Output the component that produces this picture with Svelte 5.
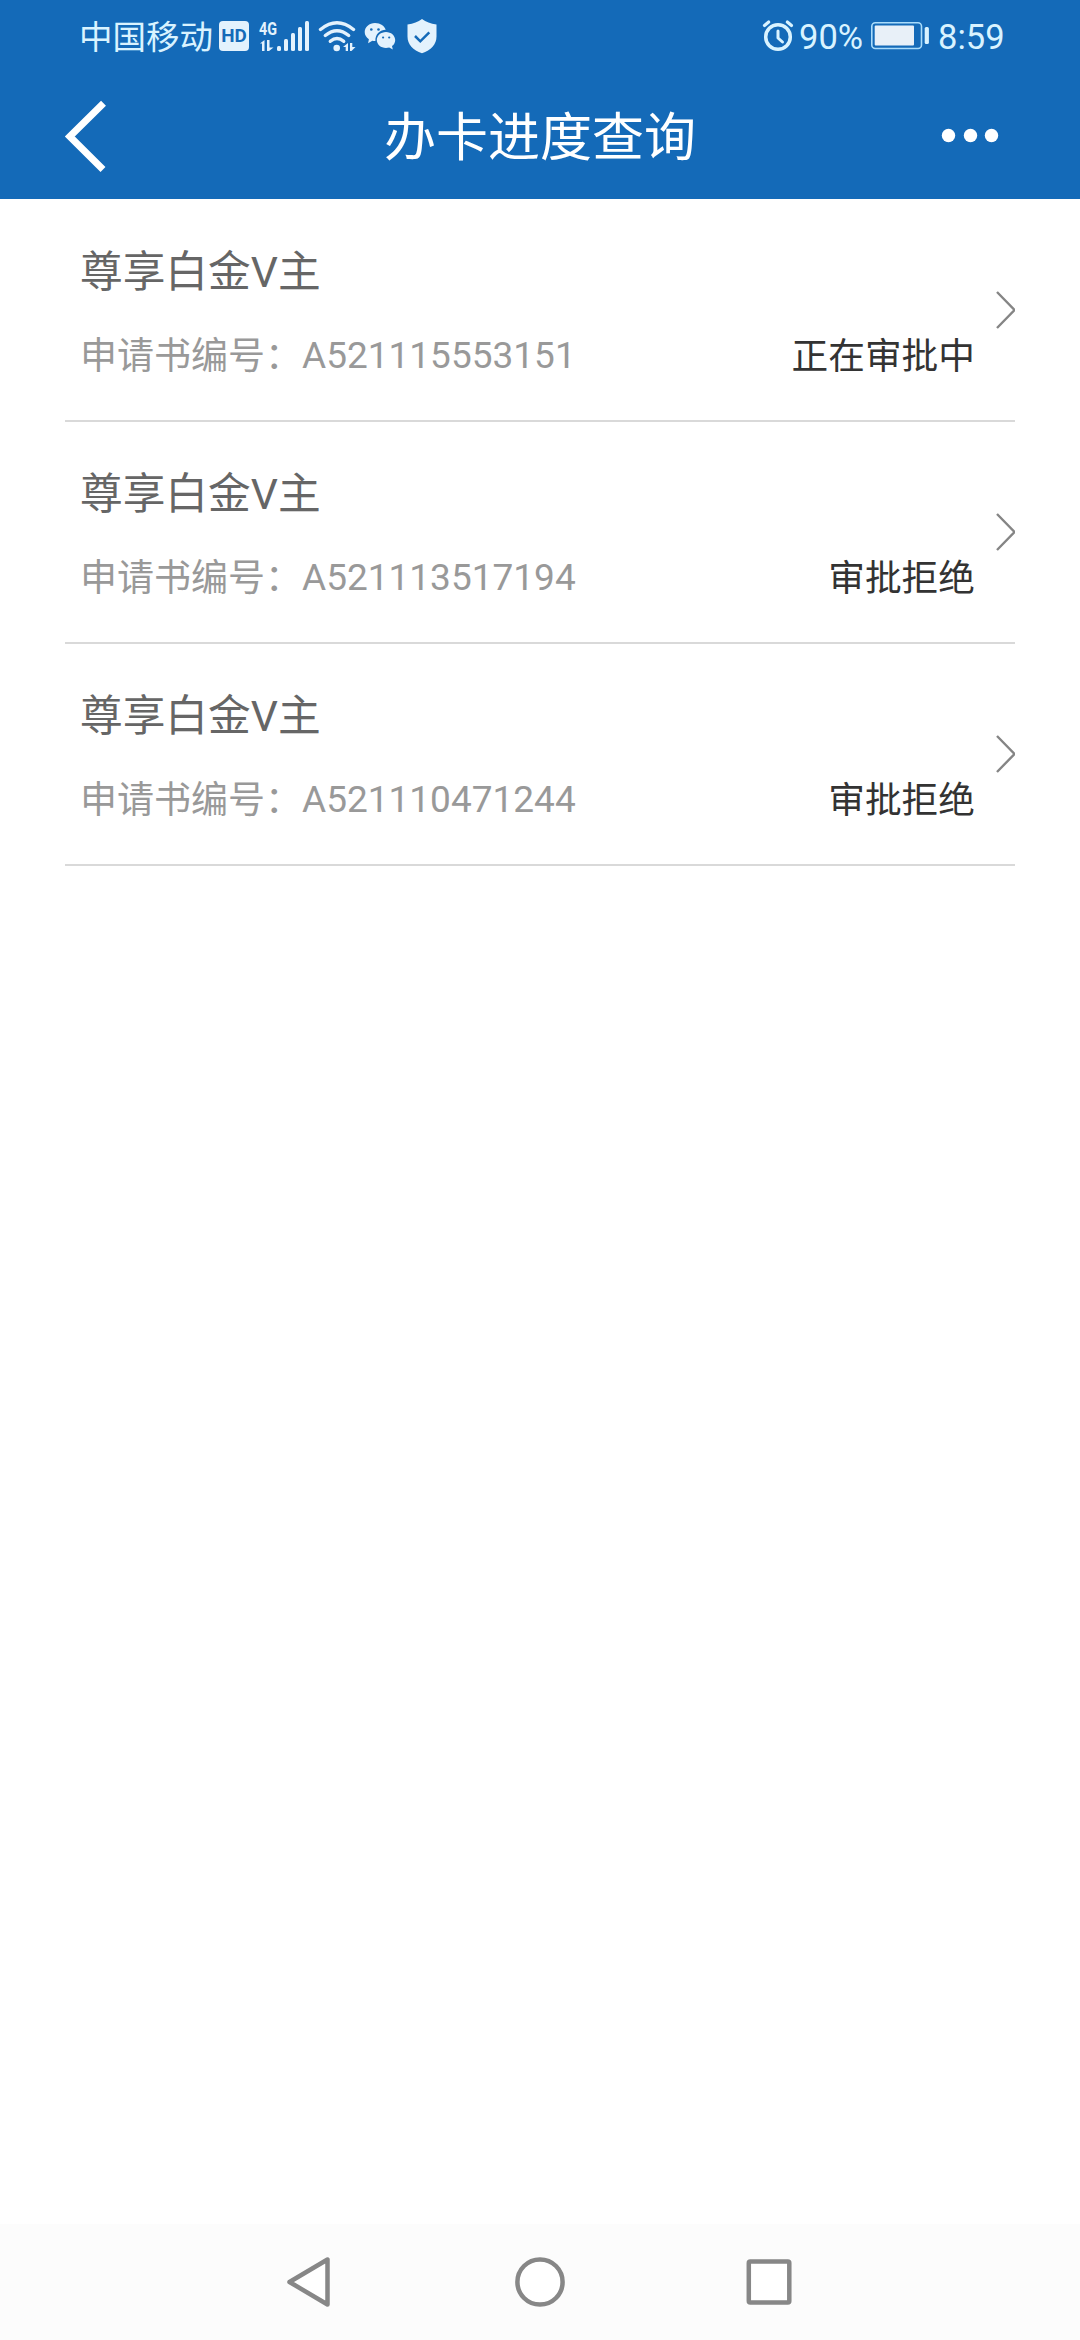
<script>
  const applications = [
    { name: '尊享白金V主', number: 'A521115553151', status: '正在审批中' },
    { name: '尊享白金V主', number: 'A521113517194', status: '审批拒绝' },
    { name: '尊享白金V主', number: 'A521110471244', status: '审批拒绝' },
  ];
</script>

<div class="screen">
  <header>
    <div class="statusbar">
      <div class="left">
        <span class="carrier">中国移动</span>
        <svg class="signals" width="220" height="40" viewBox="217 16 220 40" fill="#e3f2fd">
          <rect x="219" y="21" width="30" height="30" rx="4" />
          <text class="hd" x="221.2" y="42.3" textLength="25.6" lengthAdjust="spacingAndGlyphs">HD</text>
          <text class="net" x="259" y="34.6" textLength="18" lengthAdjust="spacingAndGlyphs">4G</text>
          <path d="M260 43.500l4.500-3.500v11h-2.500v-7.500zM267 40h2.500v7.500h4l-4.500 3.500h-2z" />
          <rect x="277" y="46" width="4" height="5" rx="1.500" />
          <rect x="284" y="39" width="4" height="12" rx="1.500" />
          <rect x="291" y="33" width="4" height="18" rx="1.500" />
          <rect x="298" y="27" width="4" height="24" rx="1.500" />
          <rect x="305" y="21" width="4" height="30" rx="1.500" />
          <g fill="none" stroke="#e3f2fd" stroke-width="3.400" stroke-linecap="round">
            <path d="M320.500 29.500Q337 16 353.500 29.500" />
            <path d="M325.300 35.500Q337 26 348.700 35.500" />
            <path d="M330.300 41.300Q337 35.500 343.700 41.300" />
          </g>
          <circle cx="336.700" cy="48" r="3.300" />
          <path d="M343 47l5-4v8h-2.300v-4zM350 43h2.300v4h3.200l-4 4h-1.500z" />
          <path d="M375 23c-5.700 0-10.300 4-10.300 9 0 3 1.600 5.500 4.200 7.200l-.8 4 4.200-2.400c1 .2 1.800.3 2.700.3l.4-.1c-.4-7 5-11.200 10.300-11.200C384.700 26 380.500 23 375 23z" />
          <path d="M386 32c-5 0-9.200 3.600-9.200 8s4.100 8 9.200 8c1.100 0 2.200-.2 3.200-.5l3.600 2-.8-3.400c2-1.400 3.200-3.600 3.200-6.100 0-4.400-4.200-8-9.200-8z" />
          <g fill="#146ab8">
            <circle cx="371.300" cy="29.500" r="1.300" /><circle cx="378.500" cy="29.500" r="1.300" />
            <circle cx="383.100" cy="37.500" r="1.100" /><circle cx="389.200" cy="37.500" r="1.100" />
          </g>
          <path d="M422 19c4 3 8.500 4.800 14.500 5.500v12c0 8-5.500 14-14.500 16.700-9-2.700-14.500-8.700-14.500-16.700v-12C413.500 23.800 418 22 422 19z" />
          <path d="M415 36l5.300 5.300 9-9" fill="none" stroke="#146ab8" stroke-width="2.500" />
        </svg>
      </div>
      <div class="right">
        <svg width="34" height="36" viewBox="761 18 34 36" fill="none" stroke="#d9f3ff" stroke-linecap="round">
          <circle cx="778" cy="37" r="12.300" stroke-width="3.500" />
          <path d="M778 31v7l4.500 4" stroke-width="3" stroke-linejoin="round" />
          <path d="M764.500 25.500l4.200-3.500M791.500 25.500l-4.200-3.500" stroke-width="3.200" />
        </svg>
        <span class="percent">90%</span>
        <svg class="battery" width="60" height="30" viewBox="870 22 60 30">
          <rect x="871.800" y="23.800" width="49.700" height="25.700" rx="3.500" fill="none" stroke="#a9dcfb" stroke-width="1.600" />
          <rect x="874.700" y="26.600" width="39.300" height="19.800" rx="1" fill="#e8f0f8" />
          <rect x="924.700" y="28" width="4.200" height="17" rx="1.500" fill="#d9f3ff" />
        </svg>
        <span class="time">8:59</span>
      </div>
    </div>
    <div class="titlebar">
      <svg width="46" height="76" viewBox="62 97 46 76" fill="none" stroke="#fff" stroke-width="7">
        <path d="M103.500 102.300L69.800 135.500L103 168.500" />
      </svg>
      <h1>办卡进度查询</h1>
      <svg width="58" height="16" viewBox="941 127 58 16" fill="#fff">
        <circle cx="948.500" cy="134.500" r="6.700" /><circle cx="970.500" cy="134.500" r="6.700" /><circle cx="991.500" cy="134.500" r="6.700" />
      </svg>
    </div>
  </header>

  <main>
    {#each applications as item}
      <article>
        <div class="info">
          <h2>{item.name}</h2>
          <div class="detail">
            <div class="number"><span class="label">申请书编号：</span><span>{item.number}</span></div>
            <span class="state">{item.status}</span>
          </div>
        </div>
        <svg class="arrow" width="20" height="38" viewBox="0 0 20 38" fill="none" stroke="#858585" stroke-width="2.400">
          <path d="M2 1L19.500 19L2 37" />
        </svg>
      </article>
    {/each}
  </main>

  <nav>
    <svg width="1080" height="116" viewBox="0 2224 1080 116" fill="#fff" stroke="#878787" stroke-width="4.500">
      <path d="M327.500 2259.500V2304.500L289.500 2282Z" stroke-linejoin="round" />
      <circle cx="540" cy="2282" r="22.600" />
      <rect x="748.800" y="2261.500" width="40.500" height="41" rx="1.500" />
    </svg>
  </nav>
</div>

<style>
  :global(body) { margin: 0; background: #fff; }
  .screen {
    width: 1080px;
    height: 2340px;
    display: flex;
    flex-direction: column;
    background: #fff;
    font-family: Roboto, "Noto Sans CJK SC", sans-serif;
  }
  header { height: 199px; background: #146ab8; flex: none; }
  .statusbar {
    height: 72px;
    box-sizing: border-box;
    padding: 0 78px 0 79px;
    display: flex;
    justify-content: space-between;
    align-items: center;
    color: #d9f3ff;
  }
  .left, .right { display: flex; align-items: center; height: 72px; }
  .carrier { width: 138px; padding-top: 4px; font-size: 33.500px; line-height: 40px; white-space: nowrap; }
  .percent { margin-left: 4px; width: 71px; font-size: 34.500px; line-height: 40px; padding-top: 2px; }
  .time { margin-left: 8px; font-size: 34.500px; line-height: 40px; padding-top: 2px; width: 64px; }
  .hd { font: 700 18px Roboto, sans-serif; fill: #146ab8; }
  .net { font: 700 19px Roboto, sans-serif; }
  .titlebar {
    height: 127px;
    box-sizing: border-box;
    padding: 0 81px 0 62px;
    display: grid;
    grid-template-columns: 58px 1fr 39px;
    align-items: center;
  }
  .titlebar svg:last-child { justify-self: end; }
  h1 { margin: 0; padding-top: 6px; font-size: 52px; line-height: 72px; font-weight: 400; color: #fff; text-align: center; }
  main { flex: 1; padding: 1px 65px 0; }
  article {
    height: 222px;
    box-sizing: border-box;
    border-bottom: 2px solid #d9d9d9;
    display: flex;
    align-items: center;
  }
  .info { flex: 1; padding: 3px 0 0 15px; }
  h2 { margin: 0; font-size: 42.700px; line-height: 60px; font-weight: 400; color: #666; }
  .detail {
    height: 52px;
    margin-top: 28px;
    display: flex;
    justify-content: space-between;
    font-size: 37px;
    line-height: 52px;
  }
  .number { display: flex; color: #999; }
  .label { padding-top: 1px; }
  .state { padding-top: 1px; font-size: 36.700px; color: #333; }
  .arrow { margin-left: 20px; }
  nav { height: 116px; background: #fcfcfc; flex: none; }
  nav svg { display: block; }
</style>
